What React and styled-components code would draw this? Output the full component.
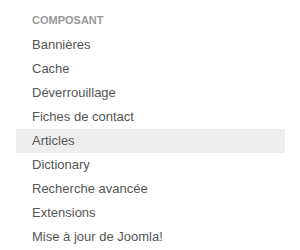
import React from 'react'
import styled, { createGlobalStyle } from 'styled-components'

const GlobalStyle = createGlobalStyle`
  body {
    margin: 0;
    background: #fff;
    font-family: "Liberation Sans", Arial, sans-serif;
  }
`

const Panel = styled.nav`
  width: 300px;
  height: 250px;
  padding-left: 16px;
  box-sizing: border-box;
  overflow: hidden;
`

const Heading = styled.div`
  height: 33px;
  box-sizing: border-box;
  padding: 14px 0 0 16px;
  font-size: 11px;
  line-height: 13px;
  font-weight: bold;
  color: #999;
  text-transform: uppercase;
`

const List = styled.ul`
  list-style: none;
  margin: 0;
  padding: 0;
  width: 269px;
`

const Item = styled.li`
  height: 24px;
  line-height: 24px;
  padding-left: 16px;
  font-size: 13px;
  color: #555;
  background: ${({ active }) => (active ? '#eee' : 'transparent')};
`

const items = [
  'Bannières',
  'Cache',
  'Déverrouillage',
  'Fiches de contact',
  'Articles',
  'Dictionary',
  'Recherche avancée',
  'Extensions',
  'Mise à jour de Joomla!',
]

const App = () => (
  <>
    <GlobalStyle />
    <Panel>
      <Heading>Composant</Heading>
      <List>
        {items.map(label => (
          <Item key={label} active={label === 'Articles'}>
            {label}
          </Item>
        ))}
      </List>
    </Panel>
  </>
)

export default App
